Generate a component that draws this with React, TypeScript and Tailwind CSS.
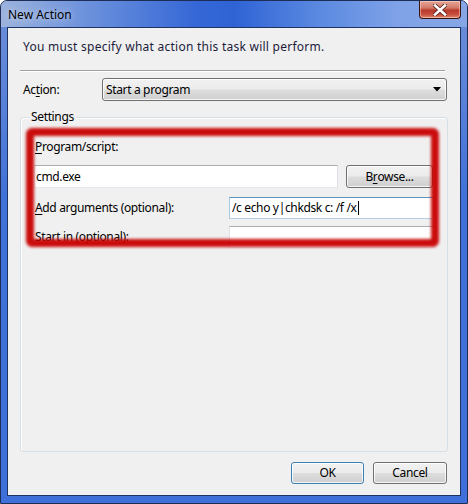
import React from "react";

const btn =
  "rounded-[3px] border border-[#707070] bg-[linear-gradient(180deg,#f2f2f2_0%,#ebebeb_48%,#dddddd_52%,#cfcfcf_100%)] shadow-[inset_0_0_0_1px_rgba(255,255,255,0.8)] text-[12px] text-black flex items-center justify-center";

export default function App() {
  return (
    <div className="w-[468px] h-[504px] relative overflow-hidden rounded-t-[7px] border border-[#1d2d55] bg-[linear-gradient(180deg,#6f90d8_0%,#4071d8_40%,#3f6fd8_100%)] flex flex-col font-['Noto_Sans',sans-serif] text-black tracking-[-0.35px]">
      {/* title bar */}
      <div className="h-[26px] shrink-0 flex items-center pl-[7px] bg-[linear-gradient(90deg,#9cb3dd_0%,#6d92dc_18%,#3567d6_42%,#2f63d5_50%,#5a89e0_68%,#7fa2e8_85%,#86a6e4_100%)]">
        <span className="text-[12px] leading-none text-black mt-[2px] tracking-normal [text-shadow:0_0_6px_rgba(255,255,255,0.7)]">
          New Action
        </span>
      </div>
      <div className="absolute right-[6px] top-0 w-[42px] h-[18px] rounded-b-[4px] border border-t-0 border-[#3a1410] bg-[linear-gradient(180deg,#e6a696_0%,#d37a6a_40%,#b83a2c_55%,#c8503e_80%,#e08a70_100%)] shadow-[inset_0_0_0_1px_rgba(255,220,210,0.5)] flex items-center justify-center">
        <svg width="14" height="12" viewBox="0 0 14 12">
          <path
            d="M2 1.5 L12 10.5 M12 1.5 L2 10.5"
            stroke="#5a2018"
            strokeWidth="4.2"
            strokeLinecap="square"
          />
          <path
            d="M2 1.5 L12 10.5 M12 1.5 L2 10.5"
            stroke="#ffffff"
            strokeWidth="2.6"
            strokeLinecap="square"
          />
        </svg>
      </div>

      {/* client area */}
      <div className="flex-1 mx-[6px] mb-[7px] border border-[#1f3264] bg-[#f0f0f0] flex flex-col relative">
        <div className="pl-[15px] pt-[11px] text-[12px] leading-[16px] text-[#1c1c3c] tracking-[0.25px]">
          You must specify what action this task will perform.
        </div>
        <div className="mt-[15px] ml-[12px] mr-[15px] border-t border-[#a0a0a0] border-b border-b-white" />

        <div className="mt-[6px] flex items-center">
          <div className="w-[94px] pl-[15px] text-[12px] leading-[16px]">
            Ac<u className="underline-offset-2">t</u>ion:
          </div>
          <div className={`flex-1 mr-[13px] h-[23px] !justify-between pl-[3px] pr-[5px] ${btn}`}>
            <span className="text-[12px]">Start a program</span>
            <svg width="8" height="5" viewBox="0 0 8 5">
              <path d="M0 0 H8 L4 4.5 Z" fill="#000" />
            </svg>
          </div>
        </div>

        {/* Settings group */}
        <div className="mt-[16px] mx-[12px] h-[335px] relative rounded-[3px] border border-[#d5dfe5] shadow-[inset_1px_1px_0_#ffffff]">
          <span className="absolute -top-[9px] left-[8px] px-[2px] bg-[#f0f0f0] text-[12px] leading-[16px]">
            Settings
          </span>
          <div className="pt-[21px] pl-[14px] text-[12px] leading-[16px]">
            <u className="underline-offset-2">P</u>rogram/script:
          </div>
          <div className="mt-[10px] ml-[13px] flex">
            <div className="w-[304px] h-[23px] bg-white border border-[#abadb3] border-l-[#e2e3ea] border-r-[#dbdfe6] border-b-[#e3e9ef] flex items-center pl-[1px] text-[12px]">
              cmd.exe
            </div>
            <div className={`ml-[8px] w-[87px] h-[23px] ${btn}`}>
              B<u className="underline-offset-2">r</u>owse...
            </div>
          </div>
          <div className="mt-[9px] flex items-center">
            <div className="w-[208px] pl-[14px] text-[12px] leading-[16px]">
              <u className="underline-offset-2">A</u>dd arguments (optional):
            </div>
            <div className="w-[205px] h-[22px] bg-white border border-[#5c93bc] border-l-[#a4c9e3] border-r-[#b5cfe7] border-b-[#b5cfe7] flex items-center pl-[2px] text-[12px]">
              /c echo y|chkdsk c: /f /x
              <span className="inline-block w-px h-[14px] bg-black ml-[1px]" />
            </div>
          </div>
          <div className="mt-[7px] flex items-center">
            <div className="w-[208px] pl-[14px] text-[12px] leading-[16px]">
              Start in (optional):
            </div>
            <div className="w-[205px] h-[22px] bg-white border border-[#abadb3] border-l-[#e2e3ea] border-r-[#dbdfe6] border-b-[#e3e9ef]" />
          </div>
        </div>

        <div className="mt-[10px] mr-[13px] flex justify-end gap-[9px]">
          <div className={`w-[73px] h-[22px] !border-[#3c7fb1] shadow-[inset_0_0_0_1px_#a9dcf6] ${btn}`}>
            OK
          </div>
          <div className={`w-[74px] h-[22px] ${btn}`}>Cancel</div>
        </div>

        {/* red highlight overlay */}
        <div className="absolute left-[18px] top-[100px] w-[413px] h-[119px] rounded-[6px] border-[8px] border-[#c80000] blur-[1.4px] opacity-95" />
      </div>
    </div>
  );
}
